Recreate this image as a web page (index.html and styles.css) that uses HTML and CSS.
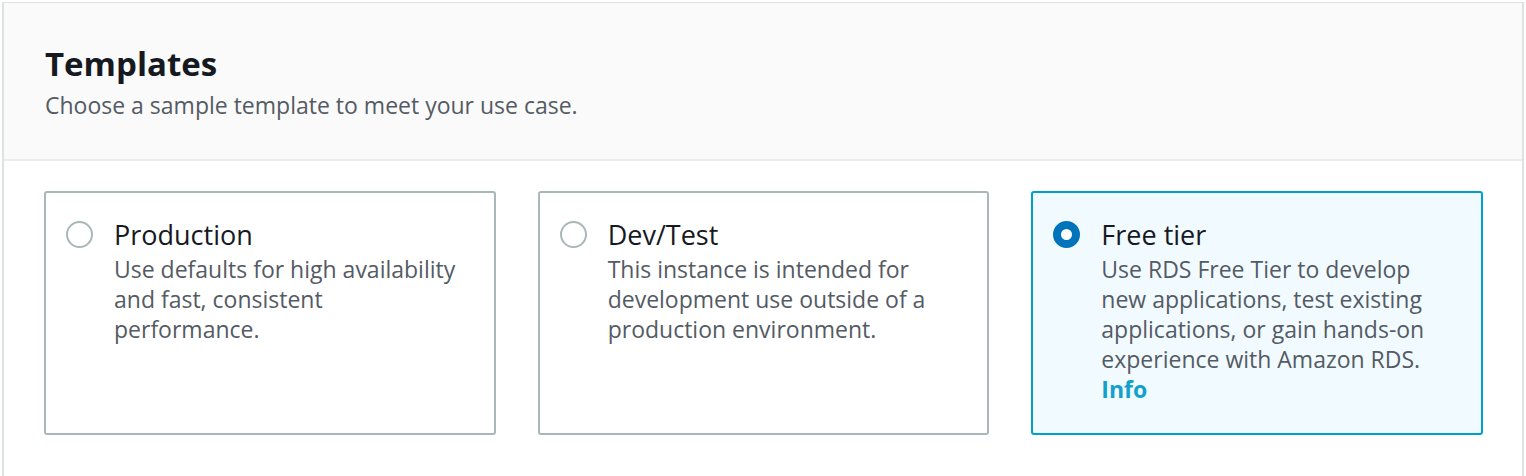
FILE: index.html
```html
<!DOCTYPE html>
<html>
<head>
<meta charset="utf-8">
<link rel="stylesheet" href="styles.css">
</head>
<body>
<div class="panel">
  <div class="panel-header">
    <h2 class="title">Templates</h2>
    <p class="subtitle">Choose a sample template to meet your use case.</p>
  </div>
  <div class="panel-body">
    <div class="tiles">
      <div class="tile">
        <span class="radio"></span>
        <div class="tile-text">
          <div class="tile-title">Production</div>
          <div class="tile-desc">Use defaults for high availability and fast, consistent performance.</div>
        </div>
      </div>
      <div class="tile">
        <span class="radio"></span>
        <div class="tile-text">
          <div class="tile-title">Dev/Test</div>
          <div class="tile-desc">This instance is intended for development use outside of a production environment.</div>
        </div>
      </div>
      <div class="tile selected">
        <span class="radio checked"></span>
        <div class="tile-text">
          <div class="tile-title">Free tier</div>
          <div class="tile-desc">Use RDS Free Tier to develop new applications, test existing applications, or gain hands-on experience with Amazon RDS. <a class="info" href="#">Info</a></div>
        </div>
      </div>
    </div>
  </div>
</div>
</body>
</html>
```

FILE: styles.css
```css
html, body {
  margin: 0;
  padding: 0;
  background: #ffffff;
}
body {
  font-family: "Open Sans", "Liberation Sans", sans-serif;
  padding: 2px 2px 0 2px;
}
.panel {
  border: 2px solid #dde2e2;
  border-bottom: none;
  border-top-width: 1px;
  height: 480px;
  box-sizing: border-box;
}
.panel-header {
  background: #fafafa;
  border-bottom: 2px solid #eaeded;
  height: 158px;
  box-sizing: border-box;
  padding: 39px 40px 0 41px;
}
.title {
  margin: 0;
  font-size: 33px;
  line-height: 44px;
  font-weight: 700;
  color: #16191f;
}
.subtitle {
  margin: 4px 0 0;
  font-size: 23px;
  line-height: 30px;
  color: #545b64;
}
.panel-body {
  padding: 30px 39px 0 40px;
}
.tiles {
  display: grid;
  grid-template-columns: repeat(3, 1fr);
  gap: 42px;
}
.tile {
  display: flex;
  gap: 21px;
  border: 2px solid #aab7b8;
  border-radius: 3px;
  height: 244px;
  box-sizing: border-box;
  padding: 25px 20px 0 20px;
}
.tile.selected {
  border-color: #00a1c9;
  background: #f1faff;
}
.radio {
  flex: none;
  width: 27px;
  height: 27px;
  box-sizing: border-box;
  border: 2px solid #aab7b8;
  border-radius: 50%;
  margin-top: 3px;
}
.radio.checked {
  border: 8.5px solid #0073bb;
  background: #ffffff;
}
.tile-text {
  flex: 1;
}
.tile-title {
  font-size: 27px;
  line-height: 34px;
  margin-bottom: 2px;
  color: #16191f;
}
.tile-desc {
  font-size: 23px;
  line-height: 30px;
  color: #545b64;
}
.info {
  display: block;
  color: #12a0cc;
  font-weight: 700;
  text-decoration: none;
}
```
